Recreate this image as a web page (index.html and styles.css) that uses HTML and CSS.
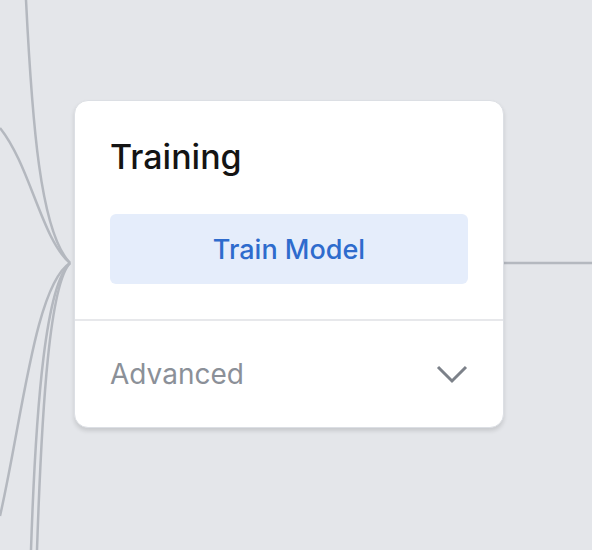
FILE: index.html
```html
<!DOCTYPE html>
<html lang="en">
<head>
  <meta charset="UTF-8">
  <title>Training node</title>
  <link rel="stylesheet" href="styles.css">
</head>
<body>

<div class="canvas">

  <!-- edges -->
  <svg class="edges" width="592" height="550" viewBox="0 0 592 550">
    <path d="M26 0 C32 120, 40 232, 70 263"/>
    <path d="M0 128 C30 165, 42 240, 70 263"/>
    <path d="M70 263 C35 285, 22 420, 0 516"/>
    <path d="M70 263 C50 285, 42 400, 37 550"/>
    <path d="M70 263 C46 285, 36 400, 31 550"/>
    <path d="M504 263 L592 263"/>
  </svg>

  <div class="node">
    <div class="node-body">
      <h3 class="node-title">Training</h3>
      <button class="train-btn">Train Model</button>
    </div>
    <div class="node-footer">
      <span>Advanced</span>
      <svg class="chevron" width="32" height="20" viewBox="0 0 32 20">
        <path d="M2 3 L16 17 L30 3"/>
      </svg>
    </div>
  </div>

</div>

</body>
</html>
```
FILE: styles.css
```css
body {
  margin: 0;
  background-color: #e4e6ea;
  font-family: Inter, "Noto Sans", sans-serif;
}
.canvas {
  position: relative;
  width: 592px;
  height: 550px;
  overflow: hidden;
}
.edges {
  position: absolute;
  left: 0;
  top: 0;
}
.edges path {
  fill: none;
  stroke: #b4b8bf;
  stroke-width: 2.5;
}
.node {
  position: absolute;
  left: 74px;
  top: 100px;
  width: 430px;
  height: 328px;
  box-sizing: border-box;
  background-color: #fff;
  border: 1px solid #dcdfe4;
  border-radius: 14px;
  box-shadow: 0 3px 4px rgba(0, 0, 0, 0.12);
}
.node-body {
  padding: 35px 35px 35px;
  border-bottom: 2px solid #e7e8eb;
}
.node-title {
  margin: 0 0 38px;
  font-size: 34px;
  line-height: 42px;
  font-weight: 500;
  color: #141414;
}
.train-btn {
  display: block;
  width: 100%;
  height: 70px;
  margin-top: -2px;
  border: none;
  border-radius: 6px;
  background-color: #e5edfb;
  color: #2e6bcd;
  font-family: inherit;
  font-size: 27px;
  font-weight: 500;
}
.node-footer {
  display: flex;
  align-items: center;
  justify-content: space-between;
  height: 106px;
  padding: 0 35px;
  color: #8b9098;
  font-size: 28px;
}
.chevron path {
  fill: none;
  stroke: #7c8189;
  stroke-width: 3;
}
```
